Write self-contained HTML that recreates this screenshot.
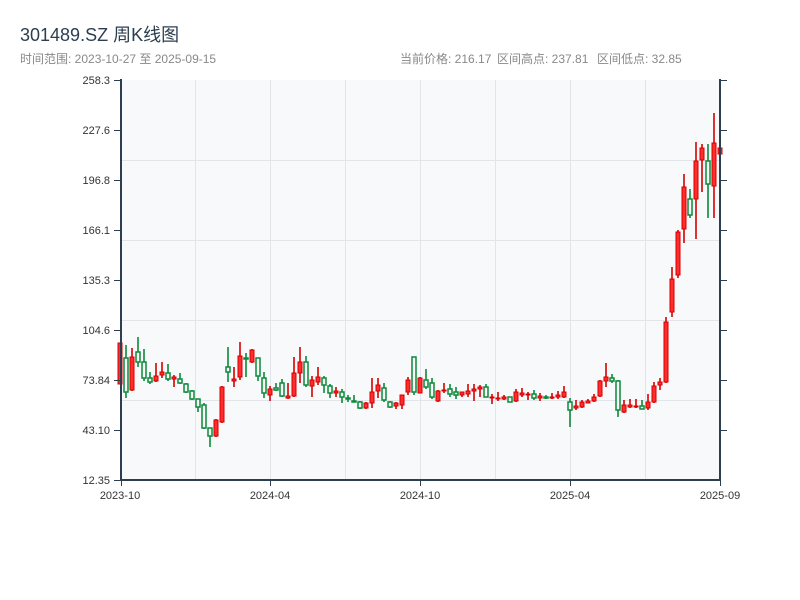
<!DOCTYPE html>
<html><head><meta charset="utf-8"><style>
html,body{margin:0;padding:0;background:#fff;width:800px;height:600px;overflow:hidden}
svg{display:block}
text{font-family:"Liberation Sans","Noto Sans CJK SC",sans-serif}
.r line{stroke:#d40000;stroke-width:1.6}
.r rect{fill:#ff2d2d;stroke:#d40000;stroke-width:1}
.g line{stroke:#0b8a3a;stroke-width:1.6}
.g rect{fill:#f7f9fb;stroke:#0b8a3a;stroke-width:1.5}
</style></head><body>
<svg width="800" height="600" xmlns="http://www.w3.org/2000/svg">
<text x="20" y="41" font-size="18" fill="#2c3e50">301489.SZ 周K线图</text>
<text x="20" y="63" font-size="12" fill="#888">时间范围: 2023-10-27 至 2025-09-15</text>
<text x="400" y="63" font-size="12" fill="#888">当前价格: 216.17</text>
<text x="497" y="63" font-size="12" fill="#888">区间高点: 237.81</text>
<text x="597" y="63" font-size="12" fill="#888">区间低点: 32.85</text>
<rect x="121" y="80" width="599" height="400" fill="#f7f9fb"/>
<g stroke="#e1e5ea" stroke-width="1">
<line x1="195.5" y1="80" x2="195.5" y2="480"/><line x1="270.5" y1="80" x2="270.5" y2="480"/><line x1="345.5" y1="80" x2="345.5" y2="480"/><line x1="420.5" y1="80" x2="420.5" y2="480"/><line x1="495.5" y1="80" x2="495.5" y2="480"/><line x1="570.5" y1="80" x2="570.5" y2="480"/><line x1="645.5" y1="80" x2="645.5" y2="480"/>
<line x1="121" y1="160.5" x2="720" y2="160.5"/><line x1="121" y1="240.5" x2="720" y2="240.5"/><line x1="121" y1="320.5" x2="720" y2="320.5"/><line x1="121" y1="400.5" x2="720" y2="400.5"/>
</g>
<g id="c">
<g class="r"><line x1="120" x2="120" y1="343" y2="384"/><rect x="118" y="343" width="4" height="41"/></g>
<g class="g"><line x1="126" x2="126" y1="345" y2="398"/><rect x="124" y="358" width="4" height="34"/></g>
<g class="r"><line x1="132" x2="132" y1="348" y2="391"/><rect x="130" y="357" width="4" height="33"/></g>
<g class="g"><line x1="138" x2="138" y1="337" y2="367"/><rect x="136" y="352" width="4" height="10"/></g>
<g class="g"><line x1="144" x2="144" y1="349" y2="381"/><rect x="142" y="362" width="4" height="16"/></g>
<g class="g"><line x1="150" x2="150" y1="372" y2="384"/><rect x="148" y="378" width="4" height="4"/></g>
<g class="r"><line x1="156" x2="156" y1="363" y2="382"/><rect x="154" y="376" width="4" height="5"/></g>
<g class="r"><line x1="162" x2="162" y1="362" y2="378"/><rect x="160" y="372" width="4" height="3"/></g>
<g class="g"><line x1="168" x2="168" y1="364" y2="381"/><rect x="166" y="373" width="4" height="6"/></g>
<g class="r"><line x1="174" x2="174" y1="375" y2="387"/><rect x="172" y="377" width="4" height="2"/></g>
<g class="g"><line x1="180" x2="180" y1="373" y2="384"/><rect x="178" y="379" width="4" height="4"/></g>
<g class="g"><line x1="186" x2="186" y1="383" y2="393"/><rect x="184" y="384" width="4" height="8"/></g>
<g class="g"><line x1="192" x2="192" y1="390" y2="400"/><rect x="190" y="391" width="4" height="8"/></g>
<g class="g"><line x1="198" x2="198" y1="399" y2="412"/><rect x="196" y="399" width="4" height="8"/></g>
<g class="g"><line x1="204" x2="204" y1="403" y2="429"/><rect x="202" y="405" width="4" height="23"/></g>
<g class="g"><line x1="210" x2="210" y1="428" y2="447"/><rect x="208" y="428" width="4" height="8"/></g>
<g class="r"><line x1="216" x2="216" y1="419" y2="437"/><rect x="214" y="420" width="4" height="16"/></g>
<g class="r"><line x1="222" x2="222" y1="386" y2="423"/><rect x="220" y="387" width="4" height="35"/></g>
<g class="g"><line x1="228" x2="228" y1="347" y2="382"/><rect x="226" y="367" width="4" height="5"/></g>
<g class="r"><line x1="234" x2="234" y1="367" y2="387"/><rect x="232" y="379" width="4" height="2"/></g>
<g class="r"><line x1="240" x2="240" y1="342" y2="380"/><rect x="238" y="356" width="4" height="21"/></g>
<g class="g"><line x1="246" x2="246" y1="353" y2="377"/><rect x="244" y="358" width="4" height="1"/></g>
<g class="r"><line x1="252" x2="252" y1="349" y2="363"/><rect x="250" y="350" width="4" height="12"/></g>
<g class="g"><line x1="258" x2="258" y1="358" y2="381"/><rect x="256" y="358" width="4" height="18"/></g>
<g class="g"><line x1="264" x2="264" y1="372" y2="398"/><rect x="262" y="378" width="4" height="15"/></g>
<g class="r"><line x1="270" x2="270" y1="386" y2="401"/><rect x="268" y="389" width="4" height="6"/></g>
<g class="g"><line x1="276" x2="276" y1="383" y2="391"/><rect x="274" y="388" width="4" height="2"/></g>
<g class="g"><line x1="282" x2="282" y1="379" y2="397"/><rect x="280" y="383" width="4" height="13"/></g>
<g class="r"><line x1="288" x2="288" y1="383" y2="399"/><rect x="286" y="396" width="4" height="2"/></g>
<g class="r"><line x1="294" x2="294" y1="357" y2="397"/><rect x="292" y="373" width="4" height="23"/></g>
<g class="r"><line x1="300" x2="300" y1="347" y2="383"/><rect x="298" y="362" width="4" height="11"/></g>
<g class="g"><line x1="306" x2="306" y1="356" y2="387"/><rect x="304" y="362" width="4" height="23"/></g>
<g class="r"><line x1="312" x2="312" y1="376" y2="397"/><rect x="310" y="380" width="4" height="6"/></g>
<g class="r"><line x1="318" x2="318" y1="367" y2="385"/><rect x="316" y="377" width="4" height="5"/></g>
<g class="g"><line x1="324" x2="324" y1="376" y2="393"/><rect x="322" y="378" width="4" height="7"/></g>
<g class="g"><line x1="330" x2="330" y1="384" y2="398"/><rect x="328" y="386" width="4" height="7"/></g>
<g class="r"><line x1="336" x2="336" y1="387" y2="397"/><rect x="334" y="391" width="4" height="2"/></g>
<g class="g"><line x1="342" x2="342" y1="389" y2="403"/><rect x="340" y="392" width="4" height="5"/></g>
<g class="g"><line x1="348" x2="348" y1="395" y2="402"/><rect x="346" y="398" width="4" height="1"/></g>
<g class="g"><line x1="354" x2="354" y1="395" y2="402"/><rect x="352" y="401" width="4" height="1"/></g>
<g class="g"><line x1="360" x2="360" y1="401" y2="409"/><rect x="358" y="402" width="4" height="6"/></g>
<g class="r"><line x1="366" x2="366" y1="402" y2="409"/><rect x="364" y="403" width="4" height="5"/></g>
<g class="r"><line x1="372" x2="372" y1="378" y2="408"/><rect x="370" y="392" width="4" height="11"/></g>
<g class="r"><line x1="378" x2="378" y1="378" y2="398"/><rect x="376" y="385" width="4" height="6"/></g>
<g class="g"><line x1="384" x2="384" y1="383" y2="402"/><rect x="382" y="388" width="4" height="12"/></g>
<g class="g"><line x1="390" x2="390" y1="401" y2="408"/><rect x="388" y="402" width="4" height="5"/></g>
<g class="r"><line x1="396" x2="396" y1="402" y2="409"/><rect x="394" y="403" width="4" height="3"/></g>
<g class="r"><line x1="402" x2="402" y1="395" y2="409"/><rect x="400" y="395" width="4" height="10"/></g>
<g class="r"><line x1="408" x2="408" y1="377" y2="395"/><rect x="406" y="380" width="4" height="12"/></g>
<g class="g"><line x1="414" x2="414" y1="357" y2="395"/><rect x="412" y="357" width="4" height="35"/></g>
<g class="r"><line x1="420" x2="420" y1="377" y2="393"/><rect x="418" y="378" width="4" height="15"/></g>
<g class="g"><line x1="426" x2="426" y1="369" y2="389"/><rect x="424" y="380" width="4" height="7"/></g>
<g class="g"><line x1="432" x2="432" y1="378" y2="399"/><rect x="430" y="383" width="4" height="14"/></g>
<g class="r"><line x1="438" x2="438" y1="390" y2="402"/><rect x="436" y="391" width="4" height="10"/></g>
<g class="r"><line x1="444" x2="444" y1="383" y2="393"/><rect x="442" y="390" width="4" height="1"/></g>
<g class="g"><line x1="450" x2="450" y1="384" y2="397"/><rect x="448" y="389" width="4" height="5"/></g>
<g class="g"><line x1="456" x2="456" y1="387" y2="399"/><rect x="454" y="392" width="4" height="3"/></g>
<g class="r"><line x1="462" x2="462" y1="392" y2="397"/><rect x="460" y="392" width="4" height="3"/></g>
<g class="r"><line x1="468" x2="468" y1="384" y2="397"/><rect x="466" y="391" width="4" height="3"/></g>
<g class="r"><line x1="474" x2="474" y1="384" y2="401"/><rect x="472" y="389" width="4" height="2"/></g>
<g class="r"><line x1="480" x2="480" y1="385" y2="397"/><rect x="478" y="387" width="4" height="2"/></g>
<g class="g"><line x1="486" x2="486" y1="384" y2="397"/><rect x="484" y="387" width="4" height="10"/></g>
<g class="r"><line x1="492" x2="492" y1="394" y2="404"/><rect x="490" y="397" width="4" height="1"/></g>
<g class="r"><line x1="498" x2="498" y1="392" y2="401"/><rect x="496" y="398" width="4" height="1"/></g>
<g class="r"><line x1="504" x2="504" y1="395" y2="400"/><rect x="502" y="397" width="4" height="2"/></g>
<g class="g"><line x1="510" x2="510" y1="397" y2="402"/><rect x="508" y="397" width="4" height="5"/></g>
<g class="r"><line x1="516" x2="516" y1="389" y2="402"/><rect x="514" y="392" width="4" height="9"/></g>
<g class="r"><line x1="522" x2="522" y1="388" y2="397"/><rect x="520" y="393" width="4" height="2"/></g>
<g class="r"><line x1="528" x2="528" y1="392" y2="400"/><rect x="526" y="394" width="4" height="1"/></g>
<g class="g"><line x1="534" x2="534" y1="390" y2="400"/><rect x="532" y="394" width="4" height="4"/></g>
<g class="r"><line x1="540" x2="540" y1="393" y2="401"/><rect x="538" y="396" width="4" height="2"/></g>
<g class="g"><line x1="546" x2="546" y1="395" y2="399"/><rect x="544" y="397" width="4" height="1"/></g>
<g class="r"><line x1="552" x2="552" y1="393" y2="399"/><rect x="550" y="397" width="4" height="1"/></g>
<g class="r"><line x1="558" x2="558" y1="391" y2="399"/><rect x="556" y="395" width="4" height="2"/></g>
<g class="r"><line x1="564" x2="564" y1="386" y2="398"/><rect x="562" y="392" width="4" height="5"/></g>
<g class="g"><line x1="570" x2="570" y1="398" y2="427"/><rect x="568" y="402" width="4" height="8"/></g>
<g class="r"><line x1="576" x2="576" y1="400" y2="410"/><rect x="574" y="406" width="4" height="2"/></g>
<g class="r"><line x1="582" x2="582" y1="400" y2="408"/><rect x="580" y="402" width="4" height="5"/></g>
<g class="r"><line x1="588" x2="588" y1="399" y2="403"/><rect x="586" y="401" width="4" height="2"/></g>
<g class="r"><line x1="594" x2="594" y1="394" y2="402"/><rect x="592" y="397" width="4" height="4"/></g>
<g class="r"><line x1="600" x2="600" y1="380" y2="397"/><rect x="598" y="381" width="4" height="15"/></g>
<g class="r"><line x1="606" x2="606" y1="363" y2="387"/><rect x="604" y="377" width="4" height="4"/></g>
<g class="g"><line x1="612" x2="612" y1="374" y2="383"/><rect x="610" y="378" width="4" height="3"/></g>
<g class="g"><line x1="618" x2="618" y1="380" y2="417"/><rect x="616" y="381" width="4" height="29"/></g>
<g class="r"><line x1="624" x2="624" y1="400" y2="413"/><rect x="622" y="405" width="4" height="7"/></g>
<g class="r"><line x1="630" x2="630" y1="399" y2="408"/><rect x="628" y="405" width="4" height="2"/></g>
<g class="r"><line x1="636" x2="636" y1="399" y2="408"/><rect x="634" y="406" width="4" height="1"/></g>
<g class="g"><line x1="642" x2="642" y1="400" y2="409"/><rect x="640" y="406" width="4" height="3"/></g>
<g class="r"><line x1="648" x2="648" y1="394" y2="410"/><rect x="646" y="402" width="4" height="6"/></g>
<g class="r"><line x1="654" x2="654" y1="382" y2="403"/><rect x="652" y="386" width="4" height="16"/></g>
<g class="r"><line x1="660" x2="660" y1="378" y2="390"/><rect x="658" y="382" width="4" height="3"/></g>
<g class="r"><line x1="666" x2="666" y1="317" y2="383"/><rect x="664" y="322" width="4" height="60"/></g>
<g class="r"><line x1="672" x2="672" y1="267" y2="317"/><rect x="670" y="279" width="4" height="33"/></g>
<g class="r"><line x1="678" x2="678" y1="230" y2="278"/><rect x="676" y="232" width="4" height="43"/></g>
<g class="r"><line x1="684" x2="684" y1="174" y2="243"/><rect x="682" y="187" width="4" height="42"/></g>
<g class="g"><line x1="690" x2="690" y1="189" y2="218"/><rect x="688" y="199" width="4" height="16"/></g>
<g class="r"><line x1="696" x2="696" y1="142" y2="239"/><rect x="694" y="161" width="4" height="38"/></g>
<g class="r"><line x1="702" x2="702" y1="144" y2="192"/><rect x="700" y="148" width="4" height="12"/></g>
<g class="g"><line x1="708" x2="708" y1="144" y2="218"/><rect x="706" y="161" width="4" height="23"/></g>
<g class="r"><line x1="714" x2="714" y1="113" y2="218"/><rect x="712" y="143" width="4" height="43"/></g>
<g class="r"><line x1="720" x2="720" y1="143" y2="162"/><rect x="718" y="148" width="4" height="6"/></g>
</g>
<g stroke="#2c3e50" stroke-width="2">
<line x1="121" y1="79" x2="121" y2="481"/><line x1="720" y1="79" x2="720" y2="481"/>
<line x1="120" y1="480" x2="721" y2="480"/>
</g>
<g stroke="#2c3e50" stroke-width="1">
<line x1="114" y1="80.5" x2="121" y2="80.5"/><line x1="114" y1="130.5" x2="121" y2="130.5"/><line x1="114" y1="180.5" x2="121" y2="180.5"/><line x1="114" y1="230.5" x2="121" y2="230.5"/><line x1="114" y1="280.5" x2="121" y2="280.5"/><line x1="114" y1="330.5" x2="121" y2="330.5"/><line x1="114" y1="380.5" x2="121" y2="380.5"/><line x1="114" y1="430.5" x2="121" y2="430.5"/><line x1="114" y1="480.5" x2="121" y2="480.5"/>
<line x1="720" y1="80.5" x2="727" y2="80.5"/><line x1="720" y1="130.5" x2="727" y2="130.5"/><line x1="720" y1="180.5" x2="727" y2="180.5"/><line x1="720" y1="230.5" x2="727" y2="230.5"/><line x1="720" y1="280.5" x2="727" y2="280.5"/><line x1="720" y1="330.5" x2="727" y2="330.5"/><line x1="720" y1="380.5" x2="727" y2="380.5"/><line x1="720" y1="430.5" x2="727" y2="430.5"/>
<line x1="121.5" y1="480" x2="121.5" y2="486"/><line x1="270.5" y1="480" x2="270.5" y2="486"/><line x1="420.5" y1="480" x2="420.5" y2="486"/><line x1="570.5" y1="480" x2="570.5" y2="486"/><line x1="720.5" y1="480" x2="720.5" y2="486"/>
</g>
<g font-size="11" fill="#333" text-anchor="end">
<text x="110" y="84">258.3</text><text x="110" y="134">227.6</text><text x="110" y="184">196.8</text><text x="110" y="234">166.1</text><text x="110" y="284">135.3</text><text x="110" y="334">104.6</text><text x="110" y="384">73.84</text><text x="110" y="434">43.10</text><text x="110" y="484">12.35</text>
</g>
<g font-size="11" fill="#333" text-anchor="middle">
<text x="120" y="499">2023-10</text><text x="270" y="499">2024-04</text><text x="420" y="499">2024-10</text><text x="570" y="499">2025-04</text><text x="720" y="499">2025-09</text>
</g>
</svg>
</body></html>
